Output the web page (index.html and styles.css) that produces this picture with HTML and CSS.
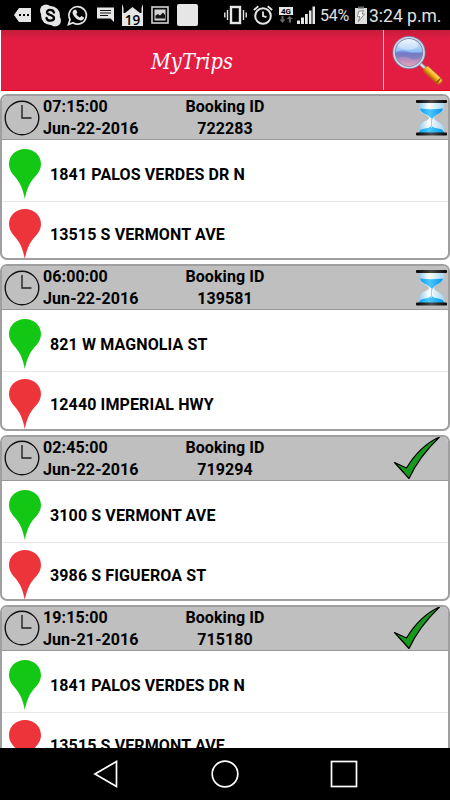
FILE: index.html
```html
<!DOCTYPE html>
<html lang="en">
  <head>
    <meta charset="UTF-8" />
    <meta name="viewport" content="width=device-width, initial-scale=1.0" />
    <title>MyTrips</title>
    <link rel="stylesheet" href="styles.css">
  </head>
  <body>
    <!-- shared icons -->
    <svg class="icon-defs" width="0" height="0">
      <defs>
        <linearGradient id="lens" x1="0" y1="0" x2="0" y2="1">
          <stop offset="0" stop-color="#f0f8ff" />
          <stop offset=".48" stop-color="#8bbdf4" />
          <stop offset=".52" stop-color="#7d7fc4" />
          <stop offset="1" stop-color="#f3a3b8" />
        </linearGradient>
        <linearGradient id="handle" x1="0" y1="0" x2="0" y2="1">
          <stop offset="0" stop-color="#ffe07a" />
          <stop offset=".45" stop-color="#fdb51c" />
          <stop offset="1" stop-color="#a65a08" />
        </linearGradient>
        <linearGradient id="glass" x1="0" y1="0" x2="1" y2="0">
          <stop offset="0" stop-color="#8fcdf0" />
          <stop offset=".4" stop-color="#ffffff" />
          <stop offset="1" stop-color="#a5d6f2" />
        </linearGradient>
        <linearGradient id="sand" x1="0" y1="0" x2="1" y2="0">
          <stop offset="0" stop-color="#0b9ff0" />
          <stop offset=".4" stop-color="#4cc8ff" />
          <stop offset="1" stop-color="#0796e8" />
        </linearGradient>
        <linearGradient id="cap" x1="0" y1="0" x2="1" y2="0">
          <stop offset="0" stop-color="#050505" />
          <stop offset=".5" stop-color="#4a4a4a" />
          <stop offset="1" stop-color="#050505" />
        </linearGradient>
      </defs>
      <symbol id="clock" viewBox="0 0 36 36">
        <circle cx="18" cy="18" r="16.800" fill="none" stroke="#111" stroke-width="1.400" />
        <path d="M18 5v13h9.500" fill="none" stroke="#222" stroke-width="1.400" />
      </symbol>
      <symbol id="pin" viewBox="0 0 32 50">
        <path d="M16 0C7 0 0 6.500 0 15C0 24 7 27 11 35C13.500 40 14.800 45 15.800 50C16.700 45 18.200 40 20.700 35C25 27 32 24 32 15C32 6.500 25 0 16 0Z" fill="currentColor" />
      </symbol>
      <symbol id="hourglass" viewBox="0 0 31 36">
        <path d="M3 3h25c0 5 1 6-4 10c-3 2-6 3-6 5s3 3 6 5c5 4 4 5 4 10H3c0-5-1-6 3-10c4-3 7-3 7-5s-4-3-7-5C2 9 3 8 3 3Z" fill="url(#glass)" />
        <path d="M4 8.500Q15 10 27 8.500Q26 12 22 14Q16.500 17 16 20Q15 17 9 14Q5 12 4 8.500Z" fill="url(#sand)" />
        <path d="M3 33Q3 29 9 28.500Q13 28 15.500 26Q18 28 22 28.500Q28 29 28 33Z" fill="url(#sand)" />
        <path d="M15.500 18v10" stroke="#8edaff" stroke-width="1" />
        <rect width="31" height="3" rx="1" fill="url(#cap)" />
        <rect y="32.500" width="31" height="3" rx="1" fill="url(#cap)" />
      </symbol>
      <symbol id="check" viewBox="0 0 48 44">
        <path d="M1.500 26.500L13.500 32C22 18 33 7 46.500 1C34 13 24 25 16 42.500Z" fill="#16991c" stroke="#000" stroke-width="1.200" stroke-linejoin="round" />
      </symbol>
    </svg>

    <div class="screen">
      <div class="status-bar">
        <div class="notifications">
          <svg width="22" height="30" viewBox="13 0 22 30">
            <path d="M14 15l5-7h12v14H19z" fill="#e6e6e6" />
            <path d="M19 14h2v2h-2zm4 0h2v2h-2zm4 0h2v2h-2z" fill="#000" />
          </svg>
          <svg width="30" height="30" viewBox="35 0 30 30">
            <circle cx="50.500" cy="15.500" r="9.500" fill="#e6e6e6" />
            <circle cx="46" cy="10.500" r="6" fill="#e6e6e6" />
            <circle cx="55" cy="20.500" r="6" fill="#e6e6e6" />
            <path d="M54 12.500C53 9 46.500 9 47 12.500C47.500 15.500 54 14.500 54 18C54 21.500 47 21.500 46.500 18" fill="none" stroke="#000" stroke-width="2.300" stroke-linecap="round" />
          </svg>
          <svg width="26" height="30" viewBox="65 0 26 30">
            <path d="M68.500 24.500l1.500-5A8.700 8.700 0 1 1 73 22.700z" fill="none" stroke="#e6e6e6" stroke-width="1.700" />
            <path d="M74 10l2-.4 1.400 3-1.200 1.500q1.300 2.600 3.700 3.500l1.500-1.500 2.700 1.400q-.5 3-3.400 3C76.500 20 72.500 15 72.500 12.500q0-1.500 1.500-2.500z" fill="#e6e6e6" />
          </svg>
          <svg width="28" height="30" viewBox="91 0 28 30">
            <path d="M97 7.500h17V22l-3.500-3.500H97z" fill="#e6e6e6" />
            <path d="M100 10.500h11M100 13h11M100 15.500h8" stroke="#111" stroke-width="1" />
          </svg>
          <svg width="29" height="30" viewBox="119 0 29 30">
            <path d="M122 4l1.500 4v5h1.500l7.500-6 7.500 6h1.500V8l1.500-4v22h-21z" fill="#e6e6e6" />
            <text x="132.500" y="24.700" class="badge-day">19</text>
          </svg>
          <svg width="26" height="30" viewBox="148 0 26 30">
            <rect x="152" y="7" width="16" height="16" fill="none" stroke="#d5d5d5" stroke-width="1.600" />
            <path d="M153.500 8.500h13v13h-13z" fill="#151515" />
            <path d="M154.500 9.500h11v11h-11z" fill="#d5d5d5" />
            <path d="M155.500 18.500v-3l2.500-1.500 2 1.500 3-3 2 2.500v3.500z" fill="#151515" />
          </svg>
          <svg width="28" height="30" viewBox="174 0 28 30">
            <rect x="177" y="4" width="21" height="22" rx="2" fill="#e6e6e6" />
          </svg>
        </div>
        <div class="system">
          <svg width="28" height="30" viewBox="222 0 28 30">
            <rect x="231" y="7" width="9" height="16" fill="none" stroke="#e6e6e6" stroke-width="2.400" />
            <path d="M227.500 10v10M224.800 12.500v5M243.500 10v10M246.200 12.500v5" stroke="#e6e6e6" stroke-width="1.400" />
          </svg>
          <svg width="27" height="30" viewBox="250 0 27 30">
            <circle cx="263" cy="16" r="7.800" fill="none" stroke="#e6e6e6" stroke-width="2" />
            <path d="M263 11.500V16l3.500 1.200M253.800 10l4.500-3.700M272.200 10l-4.500-3.700" fill="none" stroke="#e6e6e6" stroke-width="1.800" />
          </svg>
          <svg width="19" height="30" viewBox="277 0 19 30">
            <rect x="279" y="7" width="14" height="8" fill="#e6e6e6" />
            <text x="286" y="13.800" class="network">4G</text>
            <path d="M279.500 19.500h2V16h2v3.500h2l-3 3.500zM286.500 19l3-3 3.500 3h-2v3.500h-2.200V19z" fill="#666" />
          </svg>
          <svg width="22" height="30" viewBox="296 0 22 30">
            <path d="M297 20.500h3V24h-3zM301 17.500h3V24h-3zM305 14h2.800v10H305zM309 10.500h2.500V24H309zM312.500 6.500h2.500V24h-2.500z" fill="#e6e6e6" />
          </svg>
          <span class="battery-level">54%</span>
          <svg width="17" height="30" viewBox="352 0 17 30">
            <path d="M355 8h12v16h-12z" fill="#dedede" />
            <path d="M358 6.500h6V8.500h-6z" fill="#666" />
            <path d="M358.500 11.500l5-1-1.500 3.500h2.500l-6 7.500 1.300-5h-2.300z" fill="#f5f5f5" stroke="#777" stroke-width=".8" />
          </svg>
          <span class="time">3:24 p.m.</span>
        </div>
      </div>

      <header class="app-header">
        <h1>MyTrips</h1>
        <button class="search" aria-label="Search">
          <svg width="54" height="54" viewBox="388 32 54 54">
            <path d="M419 62.500l6 5.500" stroke="#9da2b3" stroke-width="3.500" />
            <path d="M419 62.500l6 5.500" stroke="#e7e9f0" stroke-width="1.500" />
            <g transform="rotate(43 424 67)">
              <rect x="424" y="63.500" width="21.500" height="7" rx="2.500" fill="url(#handle)" stroke="#b86b10" stroke-width=".7" />
              <path d="M442.500 64v6" stroke="#884907" stroke-width="1.300" />
            </g>
            <circle cx="408" cy="51.500" r="15" fill="url(#lens)" stroke="#7780a0" stroke-width="3.200" />
            <circle cx="408" cy="51.500" r="15" fill="none" stroke="#ccd6e8" stroke-width="1.700" />
            <path d="M395 51q6-3 13 0t13 0q0 4-2 6-6 3-11 0t-12 0q-1-3-1-6z" fill="#6a76c4" opacity=".55" />
            <ellipse cx="407" cy="44" rx="10" ry="5" fill="#fff" opacity=".35" />
          </svg>
        </button>
      </header>

      <main class="trips">
        <section class="trip">
          <div class="trip-head">
            <svg class="clock"><use href="#clock" /></svg>
            <div class="when">07:15:00<br>Jun-22-2016</div>
            <div class="booking">Booking ID<br>722283</div>
            <svg class="hourglass"><use href="#hourglass" /></svg>
          </div>
          <div class="stop"><svg class="pin pickup"><use href="#pin" /></svg><span>1841 PALOS VERDES DR N</span></div>
          <div class="stop"><svg class="pin dropoff"><use href="#pin" /></svg><span>13515 S VERMONT AVE</span></div>
        </section>

        <section class="trip">
          <div class="trip-head">
            <svg class="clock"><use href="#clock" /></svg>
            <div class="when">06:00:00<br>Jun-22-2016</div>
            <div class="booking">Booking ID<br>139581</div>
            <svg class="hourglass"><use href="#hourglass" /></svg>
          </div>
          <div class="stop"><svg class="pin pickup"><use href="#pin" /></svg><span>821 W MAGNOLIA ST</span></div>
          <div class="stop"><svg class="pin dropoff"><use href="#pin" /></svg><span>12440 IMPERIAL HWY</span></div>
        </section>

        <section class="trip">
          <div class="trip-head">
            <svg class="clock"><use href="#clock" /></svg>
            <div class="when">02:45:00<br>Jun-22-2016</div>
            <div class="booking">Booking ID<br>719294</div>
            <svg class="check"><use href="#check" /></svg>
          </div>
          <div class="stop"><svg class="pin pickup"><use href="#pin" /></svg><span>3100 S VERMONT AVE</span></div>
          <div class="stop"><svg class="pin dropoff"><use href="#pin" /></svg><span>3986 S FIGUEROA ST</span></div>
        </section>

        <section class="trip">
          <div class="trip-head">
            <svg class="clock"><use href="#clock" /></svg>
            <div class="when">19:15:00<br>Jun-21-2016</div>
            <div class="booking">Booking ID<br>715180</div>
            <svg class="check"><use href="#check" /></svg>
          </div>
          <div class="stop"><svg class="pin pickup"><use href="#pin" /></svg><span>1841 PALOS VERDES DR N</span></div>
          <div class="stop"><svg class="pin dropoff"><use href="#pin" /></svg><span>13515 S VERMONT AVE</span></div>
        </section>
      </main>

      <nav class="nav-bar">
        <svg width="28" height="30" viewBox="0 0 28 30">
          <path d="M3 15L24.500 2.500v25z" fill="none" stroke="#fff" stroke-width="1.700" />
        </svg>
        <svg width="30" height="30" viewBox="0 0 30 30">
          <circle cx="15" cy="15" r="12.800" fill="none" stroke="#fff" stroke-width="1.700" />
        </svg>
        <svg width="30" height="30" viewBox="0 0 30 30">
          <rect x="2.500" y="2.500" width="25" height="25" fill="none" stroke="#fff" stroke-width="1.700" />
        </svg>
      </nav>
    </div>
  </body>
</html>
```

FILE: styles.css
```css
* {
  box-sizing: border-box;
}

body {
  margin: 0;
  background: #000;
  font-family: Roboto, Arial, sans-serif;
}

svg {
  display: block;
  flex-shrink: 0;
}

.icon-defs {
  position: absolute;
}

.screen {
  display: flex;
  flex-direction: column;
  width: 450px;
  height: 800px;
  background: #fff;
  overflow: hidden;
}

/* status bar */
.status-bar {
  display: flex;
  justify-content: space-between;
  height: 30px;
  flex-shrink: 0;
  padding: 0 9px 0 13px;
  background: #000;
  color: #e0e0e0;
}

.notifications,
.system {
  display: flex;
  align-items: center;
}

.battery-level {
  width: 34px;
  padding: 2px 0 0 2px;
  font-size: 16px;
  letter-spacing: -0.3px;
  line-height: 30px;
}

.time {
  width: 72px;
  padding-top: 2px;
  font-size: 17.5px;
  line-height: 30px;
  white-space: nowrap;
}

.badge-day {
  font: 600 13.5px "Open Sans", sans-serif;
  text-anchor: middle;
}

.network {
  font: bold 8px Roboto, sans-serif;
  text-anchor: middle;
}

/* header */
.app-header {
  display: flex;
  height: 61px;
  flex-shrink: 0;
  margin-left: 1px;
  background: linear-gradient(#c51c3c, #e31d42 10px);
  border-bottom: 1px solid #e60012;
  color: #fff;
}

.app-header h1 {
  flex: 1;
  margin: 0;
  text-align: center;
  font: italic 21.5px/64px "DejaVu Serif Condensed", "DejaVu Serif", serif;
  letter-spacing: 0.1px;
}

.search {
  width: 67px;
  padding: 0 0 0 5px;
  background: none;
  border: 0;
  border-left: 1px solid #f7c3cd;
}

/* trip list */
.trips {
  flex: 1;
  min-height: 0;
  padding-top: 3px;
  overflow: hidden;
}

.trip {
  height: 166.3px;
  margin-bottom: 4px;
  border: 2px solid #9f9f9f;
  border-radius: 7px;
  overflow: hidden;
}

.trip-head {
  display: flex;
  align-items: center;
  height: 44px;
  padding: 0 1px 0 2px;
  background: #bfbfbf;
  border-bottom: 1.5px solid #999;
  font-size: 16px;
  font-weight: 700;
  line-height: 22px;
  letter-spacing: 0.1px;
  color: #000;
}

.clock {
  width: 36px;
  height: 36px;
}

.when {
  width: 136px;
  padding: 1px 0 0 3px;
}

.booking {
  width: 98px;
  padding-top: 1px;
  text-align: center;
}

.hourglass {
  width: 31px;
  height: 36px;
  margin-left: auto;
}

.check {
  width: 48px;
  height: 44px;
  margin: 0 6px 0 auto;
}

.stop {
  display: flex;
  height: 61px;
  padding: 9px 0 0 7px;
  gap: 9px;
  font-size: 16px;
  font-weight: 700;
  line-height: 52px;
  letter-spacing: 0.12px;
  color: #000;
}

.stop + .stop {
  padding-top: 7px;
  border-top: 1px solid #e6e6e6;
}

.pin {
  width: 32px;
  height: 50px;
}

.pickup {
  color: #12c814;
}

.dropoff {
  color: #ee343b;
}

/* android navigation */
.nav-bar {
  display: flex;
  justify-content: space-between;
  align-items: center;
  height: 52px;
  flex-shrink: 0;
  padding: 0 91px 0 92px;
  background: #000;
}
```
